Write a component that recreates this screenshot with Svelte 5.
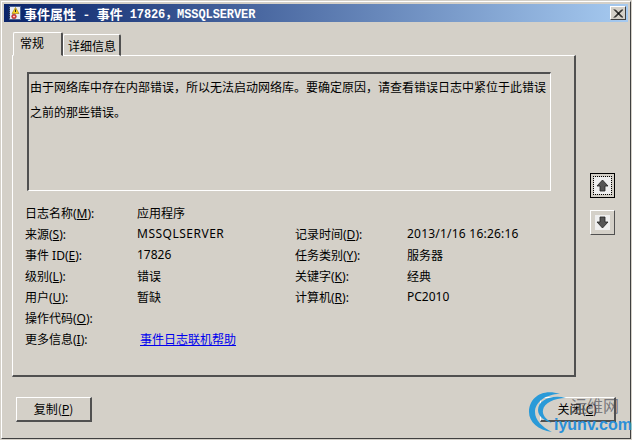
<script>
  const rows = [
    { label: '来源', key: 'S', value: 'MSSQLSERVER', cls: 'wide', label2: '记录时间', key2: 'D', value2: '2013/1/16 16:26:16', cls2: 'date' },
    { label: '事件 ID', key: 'E', value: '17826', label2: '任务类别', key2: 'Y', value2: '服务器' },
    { label: '级别', key: 'L', value: '错误', label2: '关键字', key2: 'K', value2: '经典' },
    { label: '用户', key: 'U', value: '暂缺', label2: '计算机', key2: 'R', value2: 'PC2010' }
  ]
</script>

<div class="window">
  <div class="titlebar">
    <svg class="appicon" viewBox="0 0 16 16" width="16" height="16">
      <rect x="2.500" y="1.500" width="11" height="13" fill="#e8ecf6" stroke="#47608f" />
      <path d="M2 2v12" stroke="#1c2c55" stroke-width="2" stroke-dasharray="1 1" />
      <path d="M8.500 2.500 L12 8.500 H5 Z" fill="#f5d020" stroke="#a07800" stroke-width=".6" />
      <path d="M8.500 4.500v2.500" stroke="#222" />
      <circle cx="7" cy="11.500" r="2.300" fill="#e04040" stroke="#902020" stroke-width=".6" />
      <circle cx="7" cy="11.500" r=".8" fill="#fff" />
    </svg>
    <span class="title-cjk">事件属性 - 事件</span>
    <span class="title-mono">17826，MSSQLSERVER</span>
    <button class="close-x" aria-label="关闭">
      <svg viewBox="0 0 10 9" width="10" height="9"><path d="M1 0.500 L9 8.500 M2 0.500 L10 8.500 M9 0.500 L1 8.500 M10 0.500 L2 8.500" stroke="#000" stroke-width="1" /></svg>
    </button>
  </div>

  <div class="main">
    <div class="left">
      <div class="tabs">
        <div class="tab active">常规</div>
        <div class="tab">详细信息</div>
      </div>
      <div class="panel">
        <div class="message">由于网络库中存在内部错误，所以无法启动网络库。要确定原因，请查看错误日志中紧位于此错误之前的那些错误。</div>
        <div class="fields">
          <span>日志名称(<u>M</u>):</span><span>应用程序</span><span></span><span></span>
          {#each rows as r}
            <span>{r.label}(<u>{r.key}</u>):</span><span class={r.cls}>{r.value}</span>
            <span>{r.label2}(<u>{r.key2}</u>):</span><span class={r.cls2}>{r.value2}</span>
          {/each}
          <span>操作代码(<u>O</u>):</span><span></span><span></span><span></span>
          <span>更多信息(<u>I</u>):</span><a href="#help" class="link">事件日志联机帮助</a><span></span><span></span>
        </div>
      </div>
    </div>
    <div class="arrows">
      <button class="arrow focused" aria-label="上一个">
        <span class="focus-ring">
          <svg viewBox="0 0 13 13" width="13" height="13"><path d="M6.500 1 L12 7 H9 V12 H4 V7 H1 Z" fill="#555" stroke="#222" stroke-width=".8" /></svg>
        </span>
      </button>
      <button class="arrow" aria-label="下一个">
        <span class="plain-ring">
          <svg viewBox="0 0 13 13" width="13" height="13"><path d="M6.500 12 L12 6 H9 V1 H4 V6 H1 Z" fill="#555" stroke="#222" stroke-width=".8" /></svg>
        </span>
      </button>
    </div>
  </div>

  <div class="footer">
    <button class="btn">复制(<u>P</u>)</button>
    <button class="btn">关闭(<u>C</u>)</button>
  </div>

  <div class="watermark">
    <svg viewBox="0 0 60 45" width="60" height="45">
      <path d="M32 4 C14 -2 1 8 1 22 C1 32 10 40 24 42 C14 37 7 30 7 22 C7 12 18 4 32 4 Z" fill="#2a9ad8" />
      <path d="M38 8 C24 4 10 10 10 20 C10 26 16 31 24 33 C18 29 14 25 15 20 C16 13 26 8 38 8 Z" fill="#2a9ad8" />
    </svg>
    <span class="wm-cn">运维网</span>
    <span class="wm-en">iyunv.com</span>
  </div>
</div>

<style>
  :global(body) {
    margin: 0;
    background: #d4d0c8;
  }
  .window {
    position: relative;
    box-sizing: border-box;
    width: 630px;
    height: 438px;
    margin: 1px 0 0 1px;
    padding: 2px;
    background: #d4d0c8;
    border: 1px solid;
    border-color: #fff #404040 #404040 #fff;
    font-family: "Noto Sans", "Noto Sans CJK SC", sans-serif;
    font-size: 12px;
    color: #000;
  }
  .titlebar {
    display: flex;
    align-items: center;
    height: 18px;
    padding: 0 2px 0 3px;
    background: linear-gradient(to right, #0a246a, #a6caf0);
    color: #fff;
    font-weight: bold;
  }
  .appicon {
    flex: none;
    margin-right: 1px;
  }
  .title-cjk {
    font-family: "Noto Sans CJK SC", sans-serif;
    font-size: 13px;
    white-space: pre;
    word-spacing: 5px;
    margin-right: 7px;
  }
  .title-mono {
    font-family: "Liberation Mono", "Noto Sans CJK SC", monospace;
    font-size: 12px;
    letter-spacing: -.1px;
  }
  .close-x {
    display: flex;
    align-items: center;
    justify-content: center;
    width: 16px;
    height: 14px;
    margin-left: auto;
    padding: 0;
    background: #d4d0c8;
    border: 1px solid;
    border-color: #fff #404040 #404040 #fff;
  }
  .main {
    display: flex;
    margin: 10px 0 0 8px;
  }
  .left {
    width: 564px;
  }
  .tabs {
    display: flex;
    align-items: flex-end;
    height: 24px;
    padding-left: 1px;
    margin-bottom: -1px;
    position: relative;
    z-index: 1;
  }
  .tab {
    box-sizing: border-box;
    height: 22px;
    padding: 1px 3px 0 4px;
    font-family: "Noto Sans CJK SC", sans-serif;
    line-height: 20px;
    border: 1px solid #fff;
    border-right: 2px solid #505050;
    border-radius: 2px 2px 0 0;
  }
  .tab.active {
    width: 50px;
    height: 24px;
    padding: 0 6px;
    background: #d4d0c8;
    border-bottom-color: #d4d0c8;
  }
  .panel {
    box-sizing: border-box;
    height: 322px;
    padding: 16px 0 0 14px;
    border: 1px solid;
    border-width: 1px 2px 2px 1px;
    border-color: #fff #505050 #505050 #fff;
  }
  .message {
    box-sizing: border-box;
    height: 119px;
    width: 524px;
    padding: 0 1px;
    font-family: "Noto Sans CJK SC", sans-serif;
    line-height: 25px;
    border: 1px solid;
    border-width: 2px 1px 1px 2px;
    border-color: #505050 #fff #fff #505050;
  }
  .fields {
    display: grid;
    grid-template-columns: 112px 158px 112px 1fr;
    grid-auto-rows: 21px;
    align-items: center;
    margin: 11px 0 0 -2px;
  }
  .fields u {
    text-underline-offset: 1px;
  }
  .wide {
    letter-spacing: .5px;
  }
  .date {
    letter-spacing: .22px;
  }
  .link {
    margin-left: 3px;
    color: #0000ee;
    font-family: "Noto Sans CJK SC", sans-serif;
  }
  .arrows {
    display: flex;
    flex-direction: column;
    gap: 12px;
    margin: 141px 0 0 14px;
  }
  .arrow {
    display: flex;
    align-items: center;
    justify-content: center;
    box-sizing: border-box;
    width: 25px;
    height: 25px;
    padding: 0;
    background: #d4d0c8;
    border: 1px solid;
    border-color: #fff #505050 #505050 #fff;
  }
  .arrow.focused {
    outline: 1px solid #000;
    outline-offset: -1px;
  }
  .focus-ring,
  .plain-ring {
    display: flex;
    align-items: center;
    justify-content: center;
    width: 15px;
    height: 15px;
    background: #efefef;
  }
  .focus-ring {
    width: 17px;
    height: 17px;
    outline: 1px dotted #000;
  }
  .footer {
    display: flex;
    justify-content: space-between;
    margin: 20px 12px 0 12px;
  }
  .btn {
    box-sizing: border-box;
    width: 76px;
    height: 25px;
    padding: 0 0 2px;
    background: #d4d0c8;
    font-family: "Noto Sans CJK SC", sans-serif;
    font-size: 12px;
    color: #000;
    border: 1px solid;
    border-width: 1px 2px 2px 1px;
    border-color: #fff #505050 #505050 #fff;
  }
  .watermark {
    position: absolute;
    left: 526px;
    top: 388px;
    width: 102px;
    height: 46px;
    pointer-events: none;
  }
  .watermark svg {
    position: absolute;
    left: 0;
    top: 0;
  }
  .wm-cn {
    position: absolute;
    left: 43px;
    top: 5px;
    font-family: "Noto Sans CJK SC", sans-serif;
    font-size: 16px;
    line-height: 20px;
    color: rgba(80, 80, 90, .7);
  }
  .wm-en {
    position: absolute;
    left: 26px;
    top: 25px;
    font-family: "Liberation Sans", sans-serif;
    font-size: 16px;
    font-weight: bold;
    line-height: 20px;
    color: #2a8fd8;
  }
</style>
